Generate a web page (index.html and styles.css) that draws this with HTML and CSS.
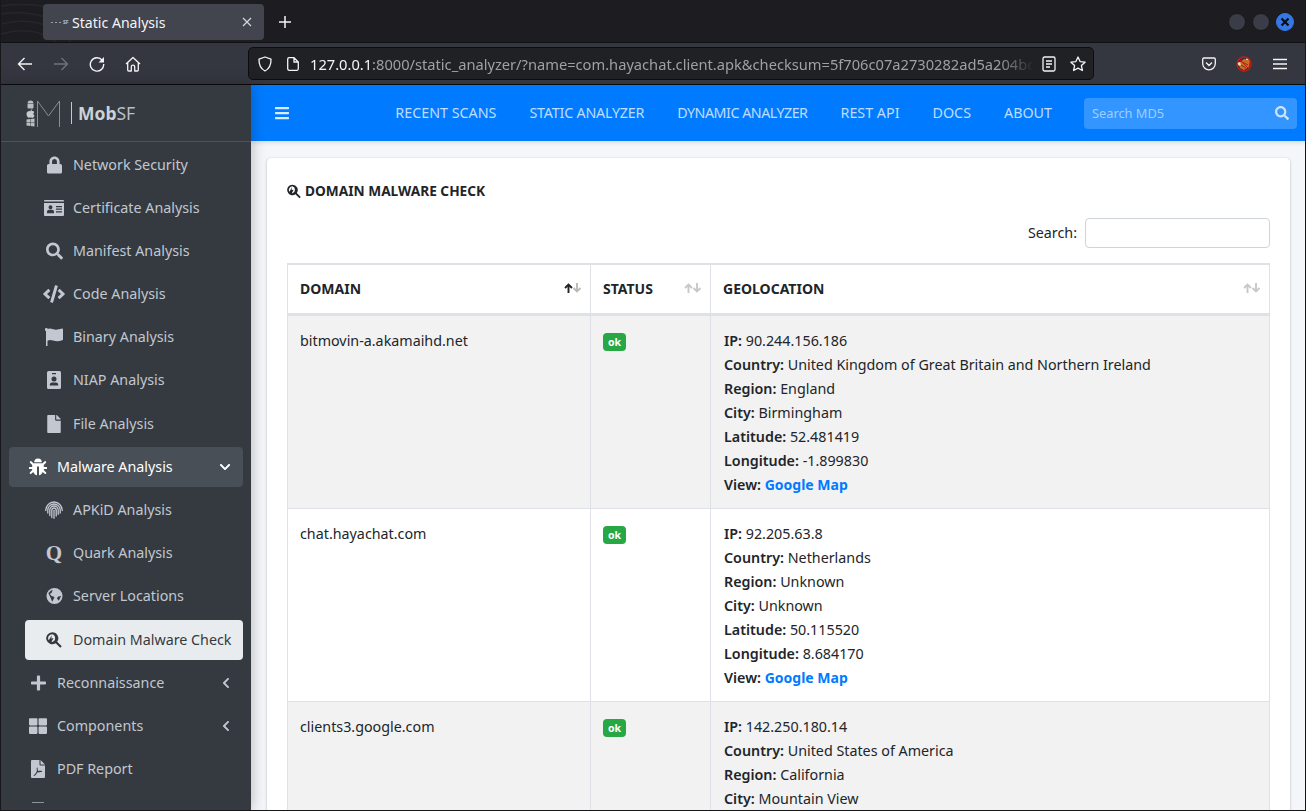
FILE: index.html
```html
<!DOCTYPE html>
<html lang="en">
<head>
<meta charset="utf-8">
<title>Static Analysis</title>
<link rel="stylesheet" href="styles.css">
</head>
<body>
<svg class="defs" aria-hidden="true">
  <symbol id="i-lock" viewBox="0 0 448 512"><path d="M400 224h-24v-72C376 68.2 307.8 0 224 0S72 68.2 72 152v72H48c-26.5 0-48 21.5-48 48v192c0 26.5 21.5 48 48 48h352c26.5 0 48-21.5 48-48V272c0-26.5-21.5-48-48-48zm-104 0H152v-72c0-39.7 32.3-72 72-72s72 32.3 72 72v72z"/></symbol>
  <symbol id="i-card" viewBox="0 0 20 16"><path fill-rule="evenodd" d="M1 0h18a1 1 0 0 1 1 1v.6H0V1a1 1 0 0 1 1-1zM0 3h20v12a1 1 0 0 1-1 1H1a1 1 0 0 1-1-1zm6.500 2.200a2 2 0 1 0 0 4 2 2 0 0 0 0-4zM3 13.200h7v-1.400c0-1.200-1-2-2-2H5c-1 0-2 .8-2 2zM12 6v1.200h6V6zm0 2.600v1.200h6V8.600zm0 2.600v1.200h6v-1.200z"/></symbol>
  <symbol id="i-search" viewBox="0 0 512 512"><path d="M505 442.700L405.300 343c-4.500-4.500-10.600-7-17-7H372c27.600-35.300 44-79.700 44-128C416 93.100 322.900 0 208 0S0 93.100 0 208s93.100 208 208 208c48.300 0 92.700-16.400 128-44v16.300c0 6.400 2.500 12.500 7 17l99.700 99.700c9.400 9.400 24.600 9.400 33.900 0l28.300-28.300c9.400-9.400 9.400-24.600.1-34zM208 336c-70.700 0-128-57.200-128-128 0-70.700 57.200-128 128-128 70.700 0 128 57.200 128 128 0 70.700-57.200 128-128 128z"/></symbol>
  <symbol id="i-code" viewBox="0 0 640 512"><path d="M278.900 511.500l-61-17.700c-6.400-1.800-10-8.500-8.200-14.900L346.200 8.700c1.800-6.400 8.500-10.100 14.900-8.200l61 17.700c6.400 1.800 10 8.500 8.200 14.900L293.800 503.300c-1.900 6.400-8.500 10.100-14.900 8.200zm-114-112.200l43.500-46.400c4.600-4.900 4.300-12.700-.8-17.200L117 256l90.600-79.700c5.100-4.500 5.500-12.300.8-17.200l-43.500-46.400c-4.500-4.800-12.100-5.100-17-.5L3.800 247.200c-5.100 4.700-5.100 12.800 0 17.500l144.100 135.100c4.900 4.600 12.500 4.400 17-.5zm327.200.6l144.100-135.100c5.100-4.700 5.100-12.800 0-17.500L492.100 112.100c-4.800-4.500-12.400-4.300-17 .5L431.600 159c-4.600 4.900-4.300 12.700.8 17.200L523 256l-90.600 79.700c-5.100 4.500-5.500 12.300-.8 17.200l43.500 46.400c4.500 4.900 12.100 5.100 17 .6z"/></symbol>
  <symbol id="i-flag" viewBox="0 0 18 18"><path d="M1 0a1 1 0 0 1 1.500.8V1c1.500-.7 3-.7 5 0 2.500.9 5 .9 9.500-.4.500-.1 1 .2 1 .7v10c0 .4-.2.700-.6.900-3.400 1.400-6.400 1.400-9.400.4-2.200-.7-3.600-.7-5.500.2V18H1V3.200A1.700 1.700 0 0 1 1 0z"/></symbol>
  <symbol id="i-badge" viewBox="0 0 14 18"><path fill-rule="evenodd" d="M1.500 0h11A1.500 1.500 0 0 1 14 1.500v15a1.500 1.500 0 0 1-1.500 1.500h-11A1.500 1.500 0 0 1 0 16.500v-15A1.500 1.500 0 0 1 1.500 0zM5 2v1.200h4V2zm2 3.500a2.500 2.500 0 1 0 0 5 2.500 2.500 0 0 0 0-5zM2.800 14.500h8.400v-.8c0-1.200-1-2.200-2.200-2.200H5c-1.200 0-2.200 1-2.200 2.200z"/></symbol>
  <symbol id="i-file" viewBox="0 0 384 512"><path d="M224 136V0H24C10.700 0 0 10.700 0 24v464c0 13.300 10.700 24 24 24h336c13.300 0 24-10.700 24-24V160H248c-13.200 0-24-10.800-24-24zm160-14.100v6.100H256V0h6.100c6.400 0 12.500 2.500 17 7l97.900 98c4.500 4.500 7 10.600 7 16.900z"/></symbol>
  <symbol id="i-bug" viewBox="0 0 18 18"><path d="M5.200 4.300a3.800 3.800 0 0 1 7.600 0zM4.400 5.300h9.200l2-2a1 1 0 0 1 1.400 1.400l-2.200 2.200V9H17.300a1 1 0 0 1 0 2H14.800v1.100l2.300 2.300a1 1 0 0 1-1.400 1.400L13.700 14c-.8 1.800-2 3-3.700 3.300V8.500H8v8.800C6.300 17 5.100 15.800 4.300 14l-2 1.800A1 1 0 0 1 .9 14.400l2.300-2.300V11H.7a1 1 0 0 1 0-2h2.500V6.900L1 4.700a1 1 0 0 1 1.400-1.400z"/></symbol>
  <symbol id="i-finger" viewBox="0 0 18 18"><g fill="none" stroke="currentColor" stroke-width="1.300" stroke-linecap="round"><path d="M.8 9.500C.8 4.800 4.500 1 9 1s8.200 3.800 8.200 8.500"/><path d="M2.800 12V9.300C2.800 5.800 5.600 3 9 3s6.200 2.800 6.200 6.300V12"/><path d="M4.800 14.500V9.300C4.800 7 6.700 5 9 5s4.200 2 4.200 4.300v4"/><path d="M6.800 16.500V9.300C6.800 8 7.800 7 9 7s2.200 1 2.200 2.300V15"/><path d="M9 9.300V17.300"/></g></symbol>
  <symbol id="i-globe" viewBox="0 0 18 18"><path fill-rule="evenodd" d="M9 .5a8.500 8.500 0 1 1 0 17 8.500 8.500 0 0 1 0-17zM2.500 6 5 3.500 7 2.500 6 5.500 4 7 6 9 9 10 8 12.500 6.500 15 5 11zM16 9l-3 .5-1.500 2 2 2.500z"/></symbol>
  <symbol id="i-engin" viewBox="0 0 18 18"><path fill-rule="evenodd" d="M7 .2a6.800 6.800 0 0 1 5.600 10.700l5.100 5.100-1.700 1.700-5.100-5.100A6.800 6.800 0 1 1 7 .2zm0 2.200a4.600 4.600 0 0 0-3.900 7L6.600 3.300 5.900 7.200l2.600-.4-2.300 4.300.8.100a4.600 4.600 0 0 0 0-8.800z"/></symbol>
  <symbol id="i-plus" viewBox="0 0 448 512"><path d="M416 208H272V64c0-17.670-14.330-32-32-32h-32c-17.670 0-32 14.330-32 32v144H32c-17.670 0-32 14.330-32 32v32c0 17.670 14.330 32 32 32h144v144c0 17.670 14.330 32 32 32h32c17.670 0 32-14.330 32-32V304h144c17.670 0 32-14.330 32-32v-32c0-17.670-14.330-32-32-32z"/></symbol>
  <symbol id="i-large" viewBox="0 0 512 512"><path d="M296 32h192c13.255 0 24 10.745 24 24v160c0 13.255-10.745 24-24 24H296c-13.255 0-24-10.745-24-24V56c0-13.255 10.745-24 24-24zm-80 0H24C10.745 32 0 42.745 0 56v160c0 13.255 10.745 24 24 24h192c13.255 0 24-10.745 24-24V56c0-13.255-10.745-24-24-24zM0 296v160c0 13.255 10.745 24 24 24h192c13.255 0 24-10.745 24-24V296c0-13.255-10.745-24-24-24H24c-13.255 0-24 10.745-24 24zm296 184h192c13.255 0 24-10.745 24-24V296c0-13.255-10.745-24-24-24H296c-13.255 0-24 10.745-24 24v160c0 13.255 10.745 24 24 24z"/></symbol>
  <symbol id="i-pdf" viewBox="0 0 14 18"><path fill-rule="evenodd" d="M1 0h7.500v4.500a1 1 0 0 0 1 1H14V17a1 1 0 0 1-1 1H1a1 1 0 0 1-1-1V1a1 1 0 0 1 1-1zm8.500 0L14 4.500H9.500zM6.200 7.500c-.6 0-.7.800-.2 3-.7 2-1.700 3.700-3 4.400-.6.400-.3 1.100.3 1 1-.2 2-1.500 3-3.300 1.500-.5 3-.7 4.200-.6.800 0 1-.8.300-1-1-.2-2.300-.2-3.500 0-.6-.9-.8-2-.7-3 0-.3-.1-.5-.4-.5z"/></symbol>
  <symbol id="i-down" viewBox="0 0 448 512"><path d="M207.029 381.476L12.686 187.132c-9.373-9.373-9.373-24.569 0-33.941l22.667-22.667c9.357-9.357 24.522-9.375 33.901-.04L224 284.505l154.745-154.021c9.379-9.335 24.544-9.317 33.901.04l22.667 22.667c9.373 9.373 9.373 24.569 0 33.941L240.971 381.476c-9.373 9.372-24.569 9.372-33.942 0z"/></symbol>
  <symbol id="i-left" viewBox="0 0 320 512"><path d="M34.520 239.030L228.870 44.690c9.370-9.370 24.570-9.370 33.940 0l22.670 22.670c9.360 9.360 9.370 24.520.04 33.900L131.490 256l154.020 154.750c9.340 9.380 9.320 24.540-.04 33.900l-22.670 22.670c-9.370 9.370-24.570 9.370-33.940 0L34.520 272.970c-9.370-9.370-9.370-24.570 0-33.940z"/></symbol>
  <symbol id="i-bars" viewBox="0 0 448 512"><path d="M16 132h416c8.837 0 16-7.163 16-16V76c0-8.837-7.163-16-16-16H16C7.163 60 0 67.163 0 76v40c0 8.837 7.163 16 16 16zm0 160h416c8.837 0 16-7.163 16-16v-40c0-8.837-7.163-16-16-16H16c-8.837 0-16 7.163-16 16v40c0 8.837 7.163 16 16 16zm0 160h416c8.837 0 16-7.163 16-16v-40c0-8.837-7.163-16-16-16H16c-8.837 0-16 7.163-16 16v40c0 8.837 7.163 16 16 16z"/></symbol>
  <symbol id="i-sort" viewBox="0 0 18 11"><g fill="none" stroke="currentColor" stroke-width="1.900"><path d="M4.500 10V1.500M1 5l3.500-3.500L8 5"/></g></symbol>
  <symbol id="i-sort2" viewBox="0 0 18 11"><g fill="none" stroke="currentColor" stroke-width="1.900"><path d="M13 0v8.500M9.500 5l3.500 3.500L16.500 5"/></g></symbol>
</svg>

<div class="window">
  <header class="tabbar">
    <svg class="swoosh" width="130" height="42" viewBox="0 0 130 42" aria-hidden="true"><g fill="none" stroke="#26262c" stroke-width="1.500"><path d="M0 14C25 10 50 16 75 30"/><path d="M0 24C25 18 50 22 70 42"/><path d="M0 34C20 28 40 30 55 42"/><path d="M0 6C30 2 60 6 100 24"/></g></svg>
    <div class="tab">
      <span class="favicon"><i></i><i></i><i></i><b>SF</b></span>
      <span class="tab-title">Static Analysis</span>
      <svg class="tab-close" width="10" height="10" viewBox="0 0 10 10" aria-hidden="true"><path d="M1 1l8 8M9 1L1 9" stroke="#d6d7da" stroke-width="1.200" fill="none"/></svg>
    </div>
    <svg class="newtab" width="14" height="14" viewBox="0 0 14 14" aria-hidden="true"><path d="M7 1v12M1 7h12" stroke="#f4f4f6" stroke-width="1.500" fill="none"/></svg>
    <div class="winbtns">
      <span class="winbtn"></span>
      <span class="winbtn"></span>
      <span class="winbtn winbtn-close"><svg width="10" height="10" viewBox="0 0 10 10" aria-hidden="true"><path d="M1.500 1.500l7 7M8.500 1.500l-7 7" stroke="#0c0c10" stroke-width="2.200" fill="none"/></svg></span>
    </div>
  </header>

  <div class="toolbar">
    <svg class="tool" width="16" height="16" viewBox="0 0 16 16" aria-hidden="true"><path d="M15 8H1.500M7.500 2L1.500 8l6 6" fill="none" stroke="#f4f4f6" stroke-width="1.400"/></svg>
    <svg class="tool" width="16" height="16" viewBox="0 0 16 16" aria-hidden="true"><path d="M1 8h13.500M8.500 2l6 6-6 6" fill="none" stroke="#70727a" stroke-width="1.400"/></svg>
    <svg class="tool" width="16" height="16" viewBox="0 0 16 16" aria-hidden="true"><path d="M13.200 4.200A6.700 6.700 0 1 0 14.700 8" fill="none" stroke="#f4f4f6" stroke-width="1.400"/><path d="M15 1v5.500H9.500z" fill="#f4f4f6"/></svg>
    <svg class="tool" width="16" height="16" viewBox="0 0 16 16" aria-hidden="true"><path d="M1 8l7-6.500L15 8M2.700 6.800V14a1 1 0 0 0 1 1h2.600v-4.200a1.700 1.700 0 0 1 3.400 0V15h2.600a1 1 0 0 0 1-1V6.800" fill="none" stroke="#f4f4f6" stroke-width="1.300" stroke-linejoin="round"/></svg>
    <div class="urlbar">
      <svg width="16" height="16" viewBox="0 0 16 16" aria-hidden="true"><path d="M8 1l6 2.200c.2 5.500-1.800 9.500-6 11.800C3.800 12.700 1.800 8.700 2 3.200z" fill="none" stroke="#f4f4f6" stroke-width="1.300" stroke-linejoin="round"/></svg>
      <svg class="url-page" width="12" height="14" viewBox="0 0 12 14" aria-hidden="true"><path d="M2 .7h5l4.300 4.300v6.800a1.500 1.500 0 0 1-1.500 1.500H2A1.500 1.500 0 0 1 .7 11.800V2A1.500 1.500 0 0 1 2 .7zM7 .7V5h4.300" fill="none" stroke="#f4f4f6" stroke-width="1.300"/></svg>
      <div class="url"><span class="url-host">127.0.0.1</span>:8000/static_analyzer/?name=com.hayachat.client.apk&amp;checksum=5f706c07a2730282ad5a204bc</div>
      <svg width="14" height="16" viewBox="0 0 14 16" aria-hidden="true"><path d="M2.500 1h9A1.500 1.500 0 0 1 13 2.500v11a1.500 1.500 0 0 1-1.500 1.500h-9A1.500 1.500 0 0 1 1 13.500v-11A1.500 1.500 0 0 1 2.500 1zM4 5h6M4 8h6M4 11h4" fill="none" stroke="#f4f4f6" stroke-width="1.300"/></svg>
      <svg class="url-star" width="16" height="16" viewBox="0 0 16 16" aria-hidden="true"><path d="M8 1l2.100 4.600 5 .6-3.700 3.400 1 4.900L8 12.100l-4.400 2.400 1-4.900L.9 6.200l5-.6z" fill="none" stroke="#f4f4f6" stroke-width="1.300" stroke-linejoin="round"/></svg>
    </div>
    <div class="tool-right">
      <svg width="14" height="14" viewBox="0 0 14 14" aria-hidden="true"><path d="M2 1h10a1.300 1.300 0 0 1 1.300 1.300V6.500A6.300 6.300 0 0 1 .7 6.500V2.300A1.300 1.300 0 0 1 2 1zM4 5.500l3 3 3-3" fill="none" stroke="#f4f4f6" stroke-width="1.300"/></svg>
      <svg class="ext" width="16" height="16" viewBox="0 0 16 16" aria-hidden="true"><path d="M3 7l5-4 6 1-1 7-5 3-4-2z" fill="#c8701f"/><path d="M1 7l3-1 1 3-2 1zM11 1l2 3-3 0z" fill="#f2d6b0"/><path d="M6 6l6 3M5 9l5 3" stroke="#7a3a10" stroke-width="1"/><circle cx="8" cy="8" r="7" fill="none" stroke="#c8181e" stroke-width="1.300"/><path d="M3 3l10 10" stroke="#c8181e" stroke-width="1"/></svg>
      <svg width="14" height="12" viewBox="0 0 14 12" aria-hidden="true"><path d="M0 1.500h14M0 6h14M0 10.500h14" stroke="#f4f4f6" stroke-width="1.300" fill="none"/></svg>
    </div>
  </div>

  <div class="app">
    <aside class="sidebar">
      <div class="brand">
        <div class="brand-os">
          <svg width="9" height="9" viewBox="0 0 9 9" aria-hidden="true"><path d="M1.500 3.500a3 3 0 0 1 6 0zM1.500 4h6v3.500a1 1 0 0 1-1 1h-4a1 1 0 0 1-1-1z" fill="#b9bcc0"/></svg>
          <svg width="9" height="9" viewBox="0 0 9 9" aria-hidden="true"><path d="M4.500 2.300C6 1.500 8 2 8.300 3.300 7 4 7 6 8.500 6.500 8 8 7 9 6 8.800c-1-.3-2-.3-3 0C1.800 9 .5 6.500.5 5c0-2.500 2.500-3.500 4-2.700zM4.500 2C4.500 1 5.500.2 6.300.2 6.300 1.200 5.500 2 4.500 2z" fill="#c8cbce"/></svg>
          <svg width="9" height="9" viewBox="0 0 9 9" aria-hidden="true"><path d="M.5 1.500l3.500-.5v3.200H.5zM4.500 1l4-.5v3.700h-4zM.5 4.800H4V8L.5 7.500zM4.500 4.800h4v3.700l-4-.5z" fill="#b9bcc0"/></svg>
        </div>
        <svg class="brand-m" width="23" height="27" viewBox="0 0 23 27" aria-hidden="true"><path d="M.5 27V1l11 15L22.500 1v26" fill="none" stroke="#8a8e93" stroke-width="1"/></svg>
        <span class="brand-sep"></span>
        <span class="brand-text"><b>Mob</b>SF</span>
      </div>
      <nav class="menu">
        <a class="item sub"><span class="ico"><svg class="w15"><use href="#i-lock"/></svg></span>Network Security</a>
        <a class="item sub"><span class="ico"><svg class="w20"><use href="#i-card"/></svg></span>Certificate Analysis</a>
        <a class="item sub"><span class="ico"><svg class="w17"><use href="#i-search"/></svg></span>Manifest Analysis</a>
        <a class="item sub"><span class="ico"><svg class="w22"><use href="#i-code"/></svg></span>Code Analysis</a>
        <a class="item sub"><span class="ico"><svg class="w18"><use href="#i-flag"/></svg></span>Binary Analysis</a>
        <a class="item sub"><span class="ico"><svg class="w14"><use href="#i-badge"/></svg></span>NIAP Analysis</a>
        <a class="item sub"><span class="ico"><svg class="w14"><use href="#i-file"/></svg></span>File Analysis</a>
        <a class="item open"><span class="ico"><svg class="w18"><use href="#i-bug"/></svg></span>Malware Analysis<svg class="chev chev-down"><use href="#i-down"/></svg></a>
        <a class="item sub"><span class="ico"><svg class="w18"><use href="#i-finger"/></svg></span>APKiD Analysis</a>
        <a class="item sub"><span class="ico ico-q">Q</span>Quark Analysis</a>
        <a class="item sub"><span class="ico"><svg class="w17"><use href="#i-globe"/></svg></span>Server Locations</a>
        <a class="item sub current"><span class="ico"><svg class="w16"><use href="#i-engin"/></svg></span>Domain Malware Check</a>
        <a class="item"><span class="ico"><svg class="w15"><use href="#i-plus"/></svg></span>Reconnaissance<svg class="chev chev-left"><use href="#i-left"/></svg></a>
        <a class="item"><span class="ico"><svg class="w18"><use href="#i-large"/></svg></span>Components<svg class="chev chev-left"><use href="#i-left"/></svg></a>
        <a class="item"><span class="ico"><svg class="w14"><use href="#i-pdf"/></svg></span>PDF Report</a>
        <a class="item"><span class="ico"><span class="dash"></span></span></a>
      </nav>
    </aside>

    <main class="main">
      <div class="navbar">
        <svg class="burger"><use href="#i-bars"/></svg>
        <nav class="links">
          <a>RECENT SCANS</a>
          <a class="tight1">STATIC ANALYZER</a>
          <a class="tight2">DYNAMIC ANALYZER</a>
          <a>REST API</a>
          <a>DOCS</a>
          <a>ABOUT</a>
        </nav>
        <div class="md5">
          <span>Search MD5</span>
          <svg><use href="#i-search"/></svg>
        </div>
      </div>

      <section class="card">
        <h2 class="card-title"><svg><use href="#i-engin"/></svg>DOMAIN MALWARE CHECK</h2>
        <div class="filter"><label for="q">Search:</label><input id="q" type="text"></div>
        <table class="table">
          <colgroup><col class="c1"><col class="c2"><col class="c3"></colgroup>
          <thead>
            <tr>
              <th>DOMAIN<span class="sort sort-asc"><svg class="up"><use href="#i-sort"/></svg><svg class="dn"><use href="#i-sort2"/></svg></span></th>
              <th>STATUS<span class="sort"><svg class="dn"><use href="#i-sort"/></svg><svg class="dn"><use href="#i-sort2"/></svg></span></th>
              <th>GEOLOCATION<span class="sort"><svg class="dn"><use href="#i-sort"/></svg><svg class="dn"><use href="#i-sort2"/></svg></span></th>
            </tr>
          </thead>
          <tbody>
            <tr class="odd">
              <td>bitmovin-a.akamaihd.net</td>
              <td><span class="ok">ok</span></td>
              <td><b>IP:</b> 90.244.156.186<br><b>Country:</b> United Kingdom of Great Britain and Northern Ireland<br><b>Region:</b> England<br><b>City:</b> Birmingham<br><b>Latitude:</b> 52.481419<br><b>Longitude:</b> -1.899830<br><b>View:</b> <a class="map">Google Map</a></td>
            </tr>
            <tr>
              <td>chat.hayachat.com</td>
              <td><span class="ok">ok</span></td>
              <td><b>IP:</b> 92.205.63.8<br><b>Country:</b> Netherlands<br><b>Region:</b> Unknown<br><b>City:</b> Unknown<br><b>Latitude:</b> 50.115520<br><b>Longitude:</b> 8.684170<br><b>View:</b> <a class="map">Google Map</a></td>
            </tr>
            <tr class="odd">
              <td>clients3.google.com</td>
              <td><span class="ok">ok</span></td>
              <td><b>IP:</b> 142.250.180.14<br><b>Country:</b> United States of America<br><b>Region:</b> California<br><b>City:</b> Mountain View</td>
            </tr>
          </tbody>
        </table>
      </section>
    </main>
  </div>
</div>
</body>
</html>
```
FILE: styles.css
```css
* { box-sizing: border-box; }
html, body { margin: 0; height: 100%; overflow: hidden; }
body { font-family: "Noto Sans", "Open Sans", sans-serif; font-size: 14.3px; line-height: 24px; color: #212529; background: #1c1c21; }
.defs { display: none; }
svg { display: block; fill: currentColor; }

.window { width: 1306px; height: 811px; display: flex; flex-direction: column; border: 1px solid #17171b; border-top: 0; overflow: hidden; }

/* browser chrome */
.tabbar { position: relative; height: 43px; flex: none; display: flex; align-items: flex-start; background: #1c1c21; padding: 4px 11px 0 42px; border-bottom: 1px solid #101014; }
.swoosh { position: absolute; left: 0; top: 0; }
.tab { position: relative; width: 221px; height: 36px; display: flex; align-items: center; background: #42454e; border-radius: 4px; padding: 0 12px 0 8px; color: #f4f4f6; }
.favicon { display: flex; align-items: center; gap: 2px; width: 21px; color: #a0a2a6; }
.favicon i { width: 2px; height: 1px; background: #9a9ca0; }
.favicon b { font-size: 5px; line-height: 6px; color: #bfc1c4; }
.tab-title { flex: 1; font-size: 14.1px; line-height: 20px; padding-top: 1px; }
.newtab { position: relative; margin: 11px 0 0 14px; }
.winbtns { margin-left: auto; display: flex; gap: 6px; margin-top: 9px; }
.winbtn { width: 18px; height: 18px; border-radius: 50%; background: #3a3d47; border: 1px solid #17171c; display: flex; align-items: center; justify-content: center; }
.winbtn-close { background: #3478e5; border-color: #3478e5; }

.toolbar { height: 42px; flex: none; display: flex; align-items: center; background: #34373f; padding-left: 16px; border-bottom: 1px solid #0b0b0e; color: #f4f4f6; }
.tool { margin-right: 20px; }
.urlbar { width: 846px; height: 33px; margin-left: 87px; display: flex; align-items: center; padding: 0 7px 0 8px; background: #1f2125; border: 1px solid #0d0d10; border-radius: 5px; flex: none; }
.url-page { margin-left: 14px; }
.url { flex: 1; min-width: 0; margin: 0 0 0 11px; white-space: nowrap; overflow: hidden; font-size: 14.67px; line-height: 22px; color: #9ea0a5; -webkit-mask-image: linear-gradient(to right, #000 94%, transparent 99%); mask-image: linear-gradient(to right, #000 94%, transparent 99%); }
.url-host { color: #f4f4f6; }
.url-star { margin-left: 14px; }
.tool-right { flex: 1; display: flex; align-items: center; padding-left: 108px; gap: 0; }
.ext { margin-left: 20px; }
.tool-right svg:last-child { margin-left: 21px; }

/* app */
.app { flex: 1; min-height: 0; display: flex; }
.sidebar { position: relative; z-index: 2; width: 250px; flex: none; background: #343a40; box-shadow: 0 0 14px rgba(0,0,0,.28); overflow: hidden; color: #c2c7d0; }
.brand { height: 57px; display: flex; align-items: center; padding-left: 25px; border-bottom: 1px solid #4b545c; }
.brand-os { display: flex; flex-direction: column; gap: 0; }
.brand-m { margin-left: 2px; }
.brand-sep { width: 1px; height: 22px; margin: 0 6px 0 11px; background: #c2c7d0; }
.brand-text { font-size: 17.500px; line-height: 24px; color: #b9bec5; margin-top: -1px; }
.brand-text b { color: #cdd2d8; }

.menu { padding: 2.500px 8px 0 8px; }
.item { height: 40px; margin-bottom: 3.200px; display: flex; align-items: center; padding-left: 14px; border-radius: 4px; color: #c2c7d0; white-space: nowrap; }
.item.sub { margin-left: 16px; }
.item.open { background: #494f56; color: #fff; }
.item.current { background: #e9ecef; color: #343a40; }
.ico { width: 30px; flex: none; margin-right: 4px; display: flex; align-items: center; justify-content: center; }
.ico svg { height: 18px; }
.w14 { width: 14px; } .w15 { width: 15px; } .w16 { width: 16px; } .w17 { width: 17px; } .w18 { width: 18px; } .w20 { width: 20px; } .w22 { width: 22px; }
.ico-q { font-family: "Liberation Serif", serif; font-weight: 700; font-size: 21px; line-height: 24px; }
.dash { width: 12px; height: 1px; margin-top: -20px; background: #8f949a; }
.chev { margin-left: auto; height: 12px; }
.chev-down { width: 12px; margin-right: 12px; }
.chev-left { width: 8px; margin-right: 13px; }

.main { flex: 1; min-width: 0; background: #f4f6f9; }
.navbar { height: 56px; display: flex; align-items: center; padding: 0 8px 0 24px; background: #007bff; box-shadow: 0 2px 4px rgba(0,0,0,.1); color: rgba(255,255,255,.75); }
.burger { width: 14px; height: 16px; color: rgba(255,255,255,.85); }
.links { margin-left: auto; display: flex; gap: 33px; margin-right: 32px; }
.links a { font-size: 14.3px; }
.links .tight1 { letter-spacing: -.2px; }
.links .tight2 { letter-spacing: -.5px; }
.md5 { width: 213px; height: 31px; display: flex; align-items: center; justify-content: space-between; padding: 0 8px; background: #3395ff; border-radius: 4px; font-size: 12.8px; color: rgba(255,255,255,.55); }
.md5 svg { width: 14px; height: 14px; color: rgba(255,255,255,.75); }

.card { margin: 17px 15px 0 16px; height: 700px; padding: 21px 20px 0; background: #fff; border-radius: 4px; box-shadow: 0 0 1px rgba(0,0,0,.2), 0 1px 3px rgba(0,0,0,.2); }
.card-title { display: flex; align-items: center; gap: 4px; margin: 0; font-size: 13.7px; line-height: 24px; font-weight: 700; color: #212529; }
.card-title svg { width: 14px; height: 15px; }
.filter { display: flex; justify-content: flex-end; align-items: center; gap: 8px; margin-top: 15px; height: 30px; }
.filter input { width: 185px; height: 30px; padding: 0 8px; background: #fff; border: 1px solid #ced4da; border-radius: 4px; }
.table { width: 983px; margin-top: 15px; table-layout: fixed; border-collapse: separate; border-spacing: 0; }
.c1 { width: 303px; } .c2 { width: 120px; } .c3 { width: 560px; }
th { position: relative; height: 53px; padding: 0 12px; text-align: left; font-size: 14px; font-weight: 700; background: #fff; border-top: 2px solid #dee2e6; border-bottom: 3px solid #dee2e6; border-left: 1px solid #dee2e6; }
th:last-child { border-right: 1px solid #dee2e6; }
td { padding: 13px 12px 11px; vertical-align: top; border-bottom: 1px solid #dee2e6; border-left: 1px solid #dee2e6; background: #fff; }
td:last-child { padding-left: 13px; border-right: 1px solid #dee2e6; }
.odd td { background: #f2f2f2; }
td b { font-weight: 600; }
.map { color: #007bff; font-weight: 700; font-size: 14px; }
.ok { display: flex; width: 23px; height: 18px; margin-top: 4px; align-items: center; justify-content: center; background: #28a745; border-radius: 4px; color: #fff; font-size: 10.500px; font-weight: 700; line-height: 18px; }
.sort { position: absolute; right: 8px; top: 18px; display: flex; color: #c6cac6; }
.sort svg { width: 18px; height: 11px; }
.sort svg + svg { margin-left: -18px; }
.sort-asc .up { color: #212529; }
.sort-asc .dn { color: #b8bcb8; }
```
